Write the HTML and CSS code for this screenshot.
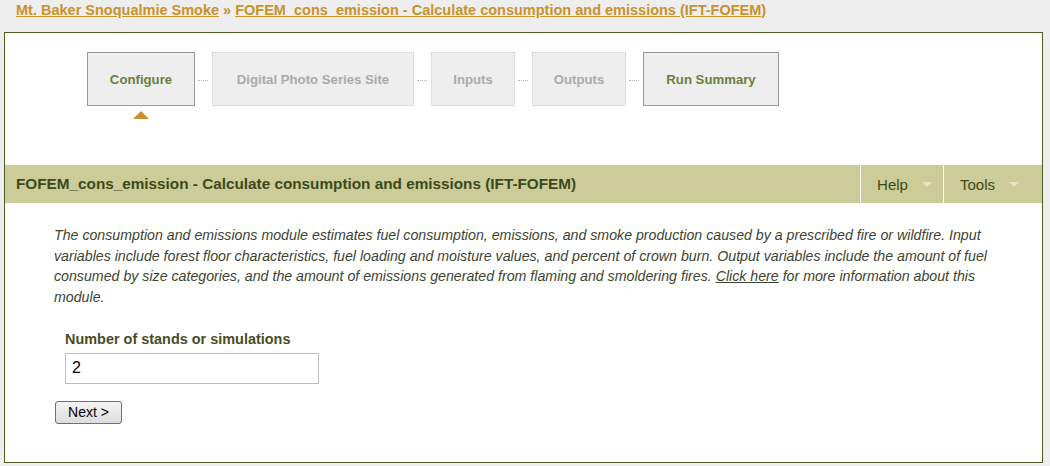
FILE: index.html
```html
<!DOCTYPE html>
<html>
<head>
<meta charset="utf-8">
<link rel="stylesheet" href="styles.css">
</head>
<body>
<div class="crumbs">
  <a href="#">Mt. Baker Snoqualmie Smoke</a> <span class="sep">»</span> <a href="#">FOFEM_cons_emission - Calculate consumption and emissions (IFT-FOFEM)</a>
</div>
<div class="main">
  <div class="steps">
    <div class="step step-configure active current">Configure</div>
    <div class="link"></div>
    <div class="step step-photo">Digital Photo Series Site</div>
    <div class="link"></div>
    <div class="step step-inputs">Inputs</div>
    <div class="link"></div>
    <div class="step step-outputs">Outputs</div>
    <div class="link"></div>
    <div class="step step-summary active">Run Summary</div>
  </div>
  <div class="bar">
    <div class="bar-title">FOFEM_cons_emission - Calculate consumption and emissions (IFT-FOFEM)</div>
    <div class="menu">Help <span class="caret"></span></div>
    <div class="menu menu-last">Tools <span class="caret"></span></div>
  </div>
  <div class="content">
    <p class="desc">The consumption and emissions module estimates fuel consumption, emissions, and smoke production caused by a prescribed fire or wildfire. Input variables include forest floor characteristics, fuel loading and moisture values, and percent of crown burn. Output variables include the amount of fuel consumed by size categories, and the amount of emissions generated from flaming and smoldering fires. <a href="#">Click here</a> for more information about this module.</p>
    <div class="field">
      <label class="label">Number of stands or simulations</label>
      <input class="input" type="text" value="2">
    </div>
    <button class="btn">Next &gt;</button>
  </div>
</div>
</body>
</html>
```

FILE: styles.css
```css
html, body {
  margin: 0;
  padding: 0;
  background: #eeeeee;
  font-family: "Liberation Sans", Arial, sans-serif;
}

.crumbs {
  padding: 2px 0 0 16px;
  box-sizing: border-box;
  height: 32px;
  font-size: 14.5px;
  font-weight: bold;
  line-height: 16px;
  color: #c9922b;
}
.crumbs a {
  color: #c9922b;
  text-decoration: underline;
}
.crumbs .sep {
  color: #c9922b;
}

.main {
  margin: 0 7px 0 4px;
  border: 1px solid #4b5e22;
  background: #ffffff;
  height: 431px;
  box-sizing: border-box;
}

.steps {
  display: flex;
  align-items: center;
  padding: 19px 0 0 82px;
  height: 54px;
}
.step {
  position: relative;
  height: 54px;
  box-sizing: border-box;
  display: flex;
  align-items: center;
  justify-content: center;
  padding-top: 1px;
  background: #eeeeee;
  border: 1px dotted #cfcfcf;
  font-size: 13.2px;
  font-weight: bold;
  color: #aaaaaa;
  white-space: nowrap;
}
.step-configure { width: 108px; }
.step-photo { width: 202px; }
.step-inputs { width: 84px; }
.step-outputs { width: 94px; }
.step-summary { width: 136px; }
.step.active {
  border: 1px solid #999999;
  color: #6b7f3c;
}
.step.current::after {
  content: "";
  position: absolute;
  left: 50%;
  top: 58px;
  margin-left: -8px;
  border-left: 8px solid transparent;
  border-right: 8px solid transparent;
  border-bottom: 8px solid #c8912c;
}
.link {
  width: 10px;
  margin: 2px 4px 0 3px;
  border-top: 1px dotted #b5b5b5;
}

.bar {
  margin-top: 59px;
  height: 38px;
  background: #cccc99;
  display: flex;
  align-items: stretch;
  color: #3b4a1c;
}
.bar-title {
  flex: 1;
  display: flex;
  align-items: center;
  padding-left: 11px;
  font-size: 15.3px;
  font-weight: bold;
}
.menu {
  display: flex;
  align-items: center;
  border-left: 1px solid #ffffff;
  padding: 0 11px 0 16px;
  font-size: 15px;
}
.menu-last {
  padding-right: 23px;
}
.caret {
  display: inline-block;
  margin-left: 14px;
  margin-top: 1px;
  border-left: 5px solid transparent;
  border-right: 5px solid transparent;
  border-top: 5px solid #e4e3c6;
}

.content {
  padding: 22px 42px 0 49px;
}
.desc {
  margin: 0;
  font-size: 14.2px;
  font-style: italic;
  line-height: 20.7px;
  color: #3d4330;
}
.desc a {
  color: #3d4330;
  text-decoration: underline;
}

.field {
  margin: 22px 0 0 11px;
  display: flex;
  flex-direction: column;
  align-items: flex-start;
}
.label {
  font-size: 14.45px;
  font-weight: bold;
  line-height: 18px;
  color: #4a4b22;
}
.input {
  margin-top: 5px;
  width: 254px;
  height: 31px;
  box-sizing: border-box;
  border: 1px solid #bdbdbd;
  padding: 0 6px;
  font-family: "Liberation Sans", Arial, sans-serif;
  font-size: 16px;
  color: #000;
}
.btn {
  margin: 17px 0 0 1px;
  width: 67px;
  height: 23px;
  box-sizing: border-box;
  border: 1px solid #707070;
  border-radius: 3px;
  background: linear-gradient(#f4f4f4, #dcdcdc);
  font-family: "Liberation Sans", Arial, sans-serif;
  font-size: 14px;
  color: #000;
  padding: 0;
}
```
